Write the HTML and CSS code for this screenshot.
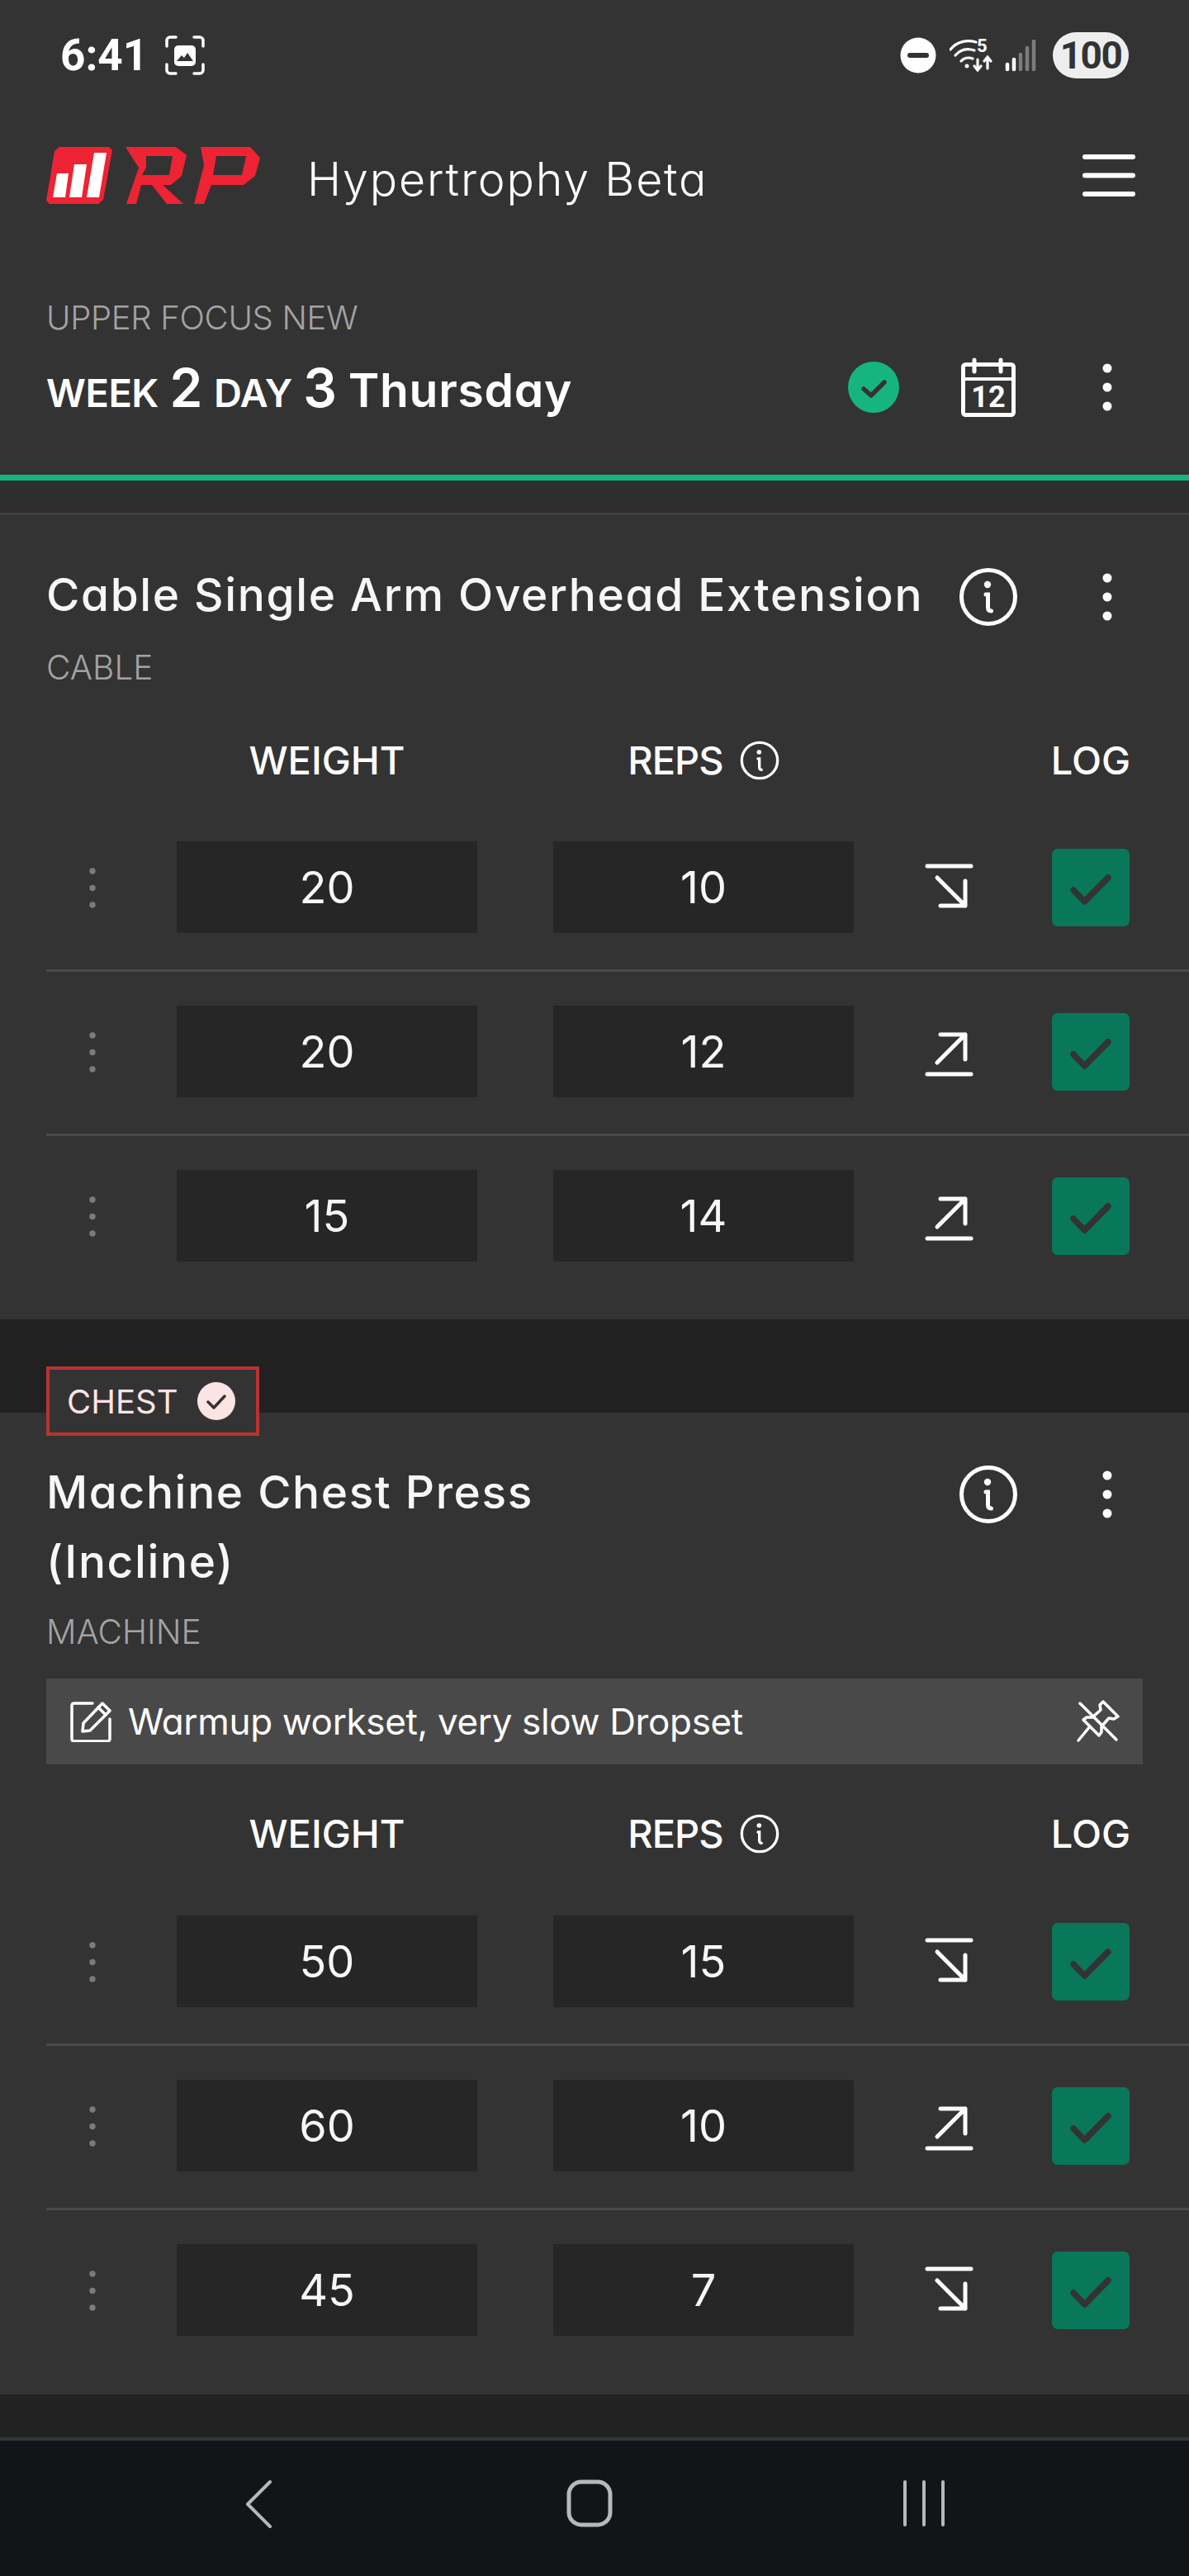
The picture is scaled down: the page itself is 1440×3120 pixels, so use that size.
FILE: index.html
```html
<!DOCTYPE html>
<html lang="en">
<head>
<meta charset="utf-8">
<title>RP Hypertrophy Beta</title>
<link rel="stylesheet" href="styles.css">
</head>
<body>
<svg class="sprite" xmlns="http://www.w3.org/2000/svg">
  <symbol id="i-info" viewBox="0 0 72 72">
    <circle cx="36" cy="36" r="32.5" fill="none" stroke="currentColor" stroke-width="5"/>
    <circle cx="35" cy="21" r="4.2" fill="currentColor"/>
    <path d="M33 33h2.500v15.500c0 3 1.500 4.500 4 4.500" fill="none" stroke="currentColor" stroke-width="5" stroke-linecap="round"/>
  </symbol>
  <symbol id="i-dots" viewBox="0 0 90 72">
    <circle cx="45" cy="13" r="5.500" fill="currentColor"/>
    <circle cx="45" cy="36" r="5.500" fill="currentColor"/>
    <circle cx="45" cy="59" r="5.500" fill="currentColor"/>
  </symbol>
  <symbol id="i-handle" viewBox="0 0 16 60">
    <circle cx="8" cy="9" r="3.700" fill="#7b7b7b"/>
    <circle cx="8" cy="29.500" r="3.700" fill="#7b7b7b"/>
    <circle cx="8" cy="50" r="3.700" fill="#7b7b7b"/>
  </symbol>
  <symbol id="i-down" viewBox="0 0 62 62">
    <g fill="none" stroke="#fff" stroke-width="5" stroke-linecap="round" stroke-linejoin="round">
      <path d="M3 3h53"/>
      <path d="M15 17l34 34M19 51h30V21"/>
    </g>
  </symbol>
  <symbol id="i-up" viewBox="0 0 62 62">
    <g fill="none" stroke="#fff" stroke-width="5" stroke-linecap="round" stroke-linejoin="round">
      <path d="M3 59h53"/>
      <path d="M15 45l34-34M19 11h30v30"/>
    </g>
  </symbol>
  <symbol id="i-log" viewBox="0 0 94 94">
    <rect width="94" height="94" rx="7" fill="#09775a"/>
    <path d="M26 50l13.500 14L68 35" fill="none" stroke="#333" stroke-width="7.500" stroke-linecap="round" stroke-linejoin="round"/>
  </symbol>
</svg>

<div class="app">
  <div class="status">
    <div class="status-left">
      <span class="clock">6:41</span>
      <svg class="shot" viewBox="0 0 48 48" width="48" height="48">
        <path d="M2 13V6c0-2.200 1.800-4 4-4h7M35 2h7c2.200 0 4 1.800 4 4v7M46 35v7c0 2.200-1.800 4-4 4h-7M13 46H6c-2.200 0-4-1.800-4-4v-7" fill="none" stroke="#fff" stroke-width="3.500" stroke-linecap="round"/>
        <rect x="11" y="12" width="26" height="25" rx="5" fill="#fff"/>
        <path d="M14 31l6-7 3 3 4-6 7 10z" fill="#333"/>
      </svg>
    </div>
    <div class="status-right">
      <svg class="dnd" viewBox="0 0 44 44" width="44" height="44">
        <circle cx="22" cy="22" r="21.500" fill="#fff"/>
        <rect x="9" y="19" width="26" height="6" rx="3" fill="#333"/>
      </svg>
      <svg class="wifi" viewBox="0 -8 56 48" width="56" height="48">
        <g fill="none" stroke="#fff" stroke-width="3.200" stroke-linecap="round">
          <path d="M1 13C9 3 21 1 32 4"/>
          <path d="M7 20c6-7 14-9 23-6"/>
          <path d="M14 27c3-4 9-5 14-3"/>
          <path d="M34 25v13M30 33l4 5 4-5"/>
          <path d="M46 36V22M42 27l4-5 4 5"/>
        </g>
        <circle cx="21" cy="33" r="2.500" fill="#fff"/>
        <text class="wifi-5" x="33" y="16">5</text>
      </svg>
      <svg class="signal" viewBox="0 0 38 40" width="38" height="40">
        <g stroke-width="4.500" stroke-linecap="round">
          <path d="M3 37v-6M11 37V25" stroke="#fff"/>
          <path d="M19 37V19M27 37V11M35 37V3" stroke="#7c7c7c"/>
        </g>
      </svg>
      <span class="battery">100</span>
    </div>
  </div>

  <header class="appbar">
    <svg class="logo" viewBox="56 178 260 70" width="260" height="70">
      <path d="M72 178h60l4 4-11 60-6 5H60l-4-4 10-60z" fill="#ee2333"/>
      <path d="M69 210h14l-4 29H64zM90 199h15l-6 40H84zM114 185h15l-9 54h-15z" fill="#fff"/>
      <path fill-rule="evenodd" d="M152 178h61l13 10-6 25-13 11h-10l25 23h-20l-18-23h-13l-6 23h-12l15-44zM177 189h32l-4 23h-33l5-9z" fill="#ee2333"/>
      <path fill-rule="evenodd" d="M243 178h60l12 13-6 22-14 11h-39l-9 23h-12l12-47zM262 189h36l-5 23h-35z" fill="#ee2333"/>
    </svg>
    <span class="brand-name">Hypertrophy Beta</span>
    <svg class="menu" viewBox="0 0 64 52" width="64" height="52">
      <path d="M3 3h58M3 25.500h58M3 48h58" stroke="#fff" stroke-width="6" stroke-linecap="round"/>
    </svg>
  </header>

  <section class="day-head">
    <div class="muted day-name">UPPER FOCUS NEW</div>
    <div class="day-row">
      <div class="day-title">
        <span class="sc">WEEK</span> <span class="num">2</span> <span class="sc">DAY</span> <span class="num">3</span> <span class="dow">Thursday</span>
      </div>
      <div class="day-actions">
        <svg class="done" viewBox="0 0 62 62" width="62" height="62">
          <circle cx="31" cy="31" r="31" fill="#16b57f"/>
          <path d="M19 33l9 8 16-16" fill="none" stroke="#333" stroke-width="5.500" stroke-linecap="round" stroke-linejoin="round"/>
        </svg>
        <svg class="calendar" viewBox="0 0 66 72" width="66" height="72">
          <rect x="2.500" y="8.500" width="61" height="61" rx="3" fill="none" stroke="#fff" stroke-width="5"/>
          <path d="M2 26h62" stroke="#fff" stroke-width="4"/>
          <path d="M16 3v14M48 3v14" stroke="#fff" stroke-width="5" stroke-linecap="round"/>
          <text class="cal-num" x="33" y="60">12</text>
        </svg>
        <svg class="dots-icon" width="90" height="72"><use href="#i-dots"/></svg>
      </div>
    </div>
  </section>
  <div class="progress"></div>
  <div class="band-top"></div>

  <section class="card card-first">
    <div class="ex-head">
      <h2 class="ex-title">Cable Single Arm Overhead Extension</h2>
      <svg class="info-lg" width="72" height="72"><use href="#i-info"/></svg>
      <svg class="dots-icon" width="90" height="72"><use href="#i-dots"/></svg>
    </div>
    <div class="muted ex-kind">CABLE</div>
    <div class="grid cols">
      <span class="col-a">WEIGHT</span>
      <span class="col-b"><span class="reps">REPS</span><svg class="info-sm" width="48" height="48"><use href="#i-info"/></svg></span>
      <span class="col-c">LOG</span>
    </div>
    <div class="grid set first-set">
      <svg class="handle" width="16" height="60"><use href="#i-handle"/></svg>
      <div class="field">20</div><div class="field">10</div>
      <svg class="trend trend-down" width="62" height="62"><use href="#i-down"/></svg>
      <svg width="94" height="94"><use href="#i-log"/></svg>
    </div>
    <div class="grid set">
      <svg class="handle" width="16" height="60"><use href="#i-handle"/></svg>
      <div class="field">20</div><div class="field">12</div>
      <svg class="trend trend-up" width="62" height="62"><use href="#i-up"/></svg>
      <svg width="94" height="94"><use href="#i-log"/></svg>
    </div>
    <div class="grid set">
      <svg class="handle" width="16" height="60"><use href="#i-handle"/></svg>
      <div class="field">15</div><div class="field">14</div>
      <svg class="trend trend-up" width="62" height="62"><use href="#i-up"/></svg>
      <svg width="94" height="94"><use href="#i-log"/></svg>
    </div>
  </section>

  <div class="band-mid"></div>

  <section class="card card-second">
    <div class="badge">
      <span>CHEST</span>
      <svg viewBox="0 0 46 46" width="46" height="46">
        <circle cx="23" cy="23" r="23" fill="#fde4e4"/>
        <path d="M13 24l7 7 13-14" fill="none" stroke="#333" stroke-width="3.500" stroke-linecap="round" stroke-linejoin="round"/>
      </svg>
    </div>
    <div class="ex-head ex-head-2">
      <h2 class="ex-title">Machine Chest Press<br>(Incline)</h2>
      <svg class="info-lg" width="72" height="72"><use href="#i-info"/></svg>
      <svg class="dots-icon" width="90" height="72"><use href="#i-dots"/></svg>
    </div>
    <div class="muted ex-kind ex-kind-2">MACHINE</div>
    <div class="note">
      <svg viewBox="0 0 50 50" width="50" height="50">
        <g fill="none" stroke="#fff" stroke-width="3.500" stroke-linecap="round" stroke-linejoin="round">
          <path d="M27 3H5C3 3 2 4 2 6v40c0 2 1 3 3 3h40c2 0 3-1 3-3V22"/>
          <path d="M16 27L39 3l9 9-24 24-9 1z"/>
          <path d="M34 8l9 9"/>
        </g>
      </svg>
      <span class="note-text">Warmup workset, very slow Dropset</span>
      <svg class="pin" viewBox="0 0 54 54" width="54" height="54">
        <g fill="none" stroke="#fff" stroke-width="3.500" stroke-linecap="round" stroke-linejoin="round">
          <path d="M33 3l18 18-5 3-6-1-9 10 0 7-3 4-19-19 4-3 7 0 10-9-1-6z"/>
          <path d="M17 33L3 50"/>
          <path d="M5 5l44 44"/>
        </g>
      </svg>
    </div>
    <div class="grid cols cols-2">
      <span class="col-a">WEIGHT</span>
      <span class="col-b"><span class="reps">REPS</span><svg class="info-sm" width="48" height="48"><use href="#i-info"/></svg></span>
      <span class="col-c">LOG</span>
    </div>
    <div class="grid set first-set">
      <svg class="handle" width="16" height="60"><use href="#i-handle"/></svg>
      <div class="field">50</div><div class="field">15</div>
      <svg class="trend trend-down" width="62" height="62"><use href="#i-down"/></svg>
      <svg width="94" height="94"><use href="#i-log"/></svg>
    </div>
    <div class="grid set">
      <svg class="handle" width="16" height="60"><use href="#i-handle"/></svg>
      <div class="field">60</div><div class="field">10</div>
      <svg class="trend trend-up" width="62" height="62"><use href="#i-up"/></svg>
      <svg width="94" height="94"><use href="#i-log"/></svg>
    </div>
    <div class="grid set">
      <svg class="handle" width="16" height="60"><use href="#i-handle"/></svg>
      <div class="field">45</div><div class="field">7</div>
      <svg class="trend trend-down" width="62" height="62"><use href="#i-down"/></svg>
      <svg width="94" height="94"><use href="#i-log"/></svg>
    </div>
  </section>

  <div class="band-bottom"></div>

  <nav class="navbar">
    <svg class="nav-back" viewBox="0 0 34 60" width="34" height="60">
      <path d="M31 3L4 30l27 27" fill="none" stroke="#b7b8ba" stroke-width="4" stroke-linecap="round" stroke-linejoin="round"/>
    </svg>
    <svg class="nav-home" viewBox="0 0 56 58" width="56" height="58">
      <rect x="3" y="3" width="50" height="52" rx="15" fill="none" stroke="#b7b8ba" stroke-width="5"/>
    </svg>
    <svg class="nav-recent" viewBox="0 0 52 58" width="52" height="58">
      <path d="M3 3v52M26 3v52M49 3v52" stroke="#b7b8ba" stroke-width="4" stroke-linecap="round"/>
    </svg>
  </nav>
</div>
</body>
</html>
```

FILE: styles.css
```css
* { box-sizing: border-box; }
html, body { margin: 0; padding: 0; background: #333; }
body {
  font-family: "Inter", "Liberation Sans", sans-serif;
  font-feature-settings: "cv11" 1;
  color: #fff;
}
.sprite { display: none; }
svg { display: block; flex: none; }

.app { width: 1440px; height: 3120px; overflow: hidden; display: flex; flex-direction: column; background: #333; }

/* status bar */
.status { height: 130px; flex: none; display: flex; justify-content: space-between; padding: 37px 73px 0 73px; }
.status-left { display: flex; align-items: center; gap: 21px; height: 60px; }
.clock { font-family: "Roboto", sans-serif; font-weight: 700; font-size: 53px; line-height: 60px; color: #fff; }
.status-right { display: flex; align-items: center; height: 60px; }
.dnd { margin-right: 16px; }
.wifi { margin-right: 11px; margin-top: -8px; }
.wifi-5 { font-family: "Roboto", sans-serif; font-weight: 700; font-size: 22px; fill: #fff; }
.signal { margin-right: 20px; }
.battery {
  width: 92px; height: 56px; border-radius: 28px; background: #eee; color: #333;
  font-family: "Roboto", sans-serif; font-weight: 700; font-size: 46px; line-height: 56px;
  text-align: center; letter-spacing: -1.5px;
}

/* app bar */
.appbar { height: 165px; flex: none; display: flex; align-items: center; padding: 0 65px 0 56px; }
.brand-name { font-size: 55.500px; font-weight: 300; margin: 8px 0 0 56px; letter-spacing: 1.800px; }
.menu { margin-left: auto; }

/* day header */
.day-head { height: 280px; flex: none; padding: 55px 54px 0 56px; }
.muted { color: #a3a3a3; font-weight: 300; }
.day-name { font-size: 40px; line-height: 70px; letter-spacing: -0.3px; }
.day-row { display: flex; align-items: flex-start; justify-content: space-between; height: 72px; margin-top: 13px; }
.day-title { font-size: 54px; font-weight: 600; line-height: 72px; white-space: nowrap; margin-top: 1px; }
.day-title .sc { font-size: 47px; letter-spacing: -0.5px; }
.day-title .num { font-size: 64px; }
.day-title .dow { font-size: 57px; letter-spacing: 0.7px; }
.day-actions { display: flex; align-items: center; }
.done { margin-right: 75px; }
.calendar { margin-right: 66px; }
.cal-num { font-family: "Roboto", sans-serif; font-weight: 700; font-size: 36px; fill: #fff; text-anchor: middle; }
.dots-icon { color: #fff; }

.progress { height: 7px; flex: none; background: #16b57f; }
.band-top { height: 39px; flex: none; background: #2e2e2e; }

/* exercise card */
.card { flex: none; background: #333; }
.card-first { height: 977px; border-top: 3px solid #404040; padding-top: 54px; }
.card-second { height: 1189px; }
.ex-head { display: flex; align-items: flex-start; padding-right: 54px; }
.ex-title { flex: 1; margin: 0; font-size: 55px; font-weight: 500; line-height: 84px; padding-left: 56px; color: #f7f7f7; white-space: nowrap; letter-spacing: 1.650px; }
.info-lg { margin: 9px 63px 0 0; color: #fff; }
.ex-head .dots-icon { margin-top: 9px; }
.ex-kind { font-size: 40.500px; line-height: 50px; margin-top: 22px; padding-left: 56px; }

.grid { display: grid; grid-template-columns: 158px 364px 92px 364px 240px 94px; align-items: center; padding-left: 56px; justify-items: center; }
.cols { height: 56px; margin-top: 58px; font-size: 47px; font-weight: 500; }
.col-a { grid-column: 2; }
.col-b { grid-column: 4; display: flex; align-items: center; gap: 20px; }
.reps { letter-spacing: -1px; }
.col-c { grid-column: 6; }
.info-sm { color: #fff; }

.set { height: 199px; margin-left: 56px; padding-left: 0; border-top: 3px solid #4a4a4a; padding-top: 41px; padding-bottom: 44px; align-items: start; }
.set.first-set { border-top-color: transparent; margin-top: 27px; }
.field { width: 364px; height: 111px; background: #262626; font-size: 54px; line-height: 111px; text-align: center; color: #f7f7f7; font-weight: 400; grid-column: 2; }
.field + .field { grid-column: 4; }
.handle { justify-self: start; margin: 27px 0 0 48px; }
.trend { grid-column: 5; margin-left: -6px; }
.trend-down { margin-top: 27px; }
.trend-up { margin-top: 24px; }
.set > svg:last-child { margin-top: 9px; grid-column: 6; }

.band-mid { height: 113px; flex: none; background: #212121; }

.badge {
  display: flex; align-items: center; justify-content: space-between;
  width: 258px; height: 84px; margin: -56px 0 0 56px; padding: 0 25px 0 21px;
  background: #333; border: 4px solid #b93232; color: #fde4e4; font-size: 40px; font-weight: 400;
  position: relative;
}
.ex-head-2 { margin-top: 26px; }
.ex-kind-2 { margin-top: 19px; }

.note {
  display: flex; align-items: center; height: 104px; margin: 31px 56px 0 56px; padding: 0 27px 0 29px;
  background: #494949;
}
.note-text { flex: 1; font-size: 44px; margin-left: 20px; font-weight: 400; letter-spacing: -0.35px; }

.cols-2 { margin-top: 55px; }
.cols-2 + .set.first-set { margin-top: 28px; }

.band-bottom { height: 52px; flex: none; background: #222; }

/* navigation bar */
.navbar { height: 168px; flex: none; background: #121418; border-top: 4px solid #33363a; display: flex; align-items: flex-start; padding-top: 47px; }
.nav-back { margin-left: 296px; }
.nav-home { margin-left: 356px; }
.nav-recent { margin-left: 351px; }
```
